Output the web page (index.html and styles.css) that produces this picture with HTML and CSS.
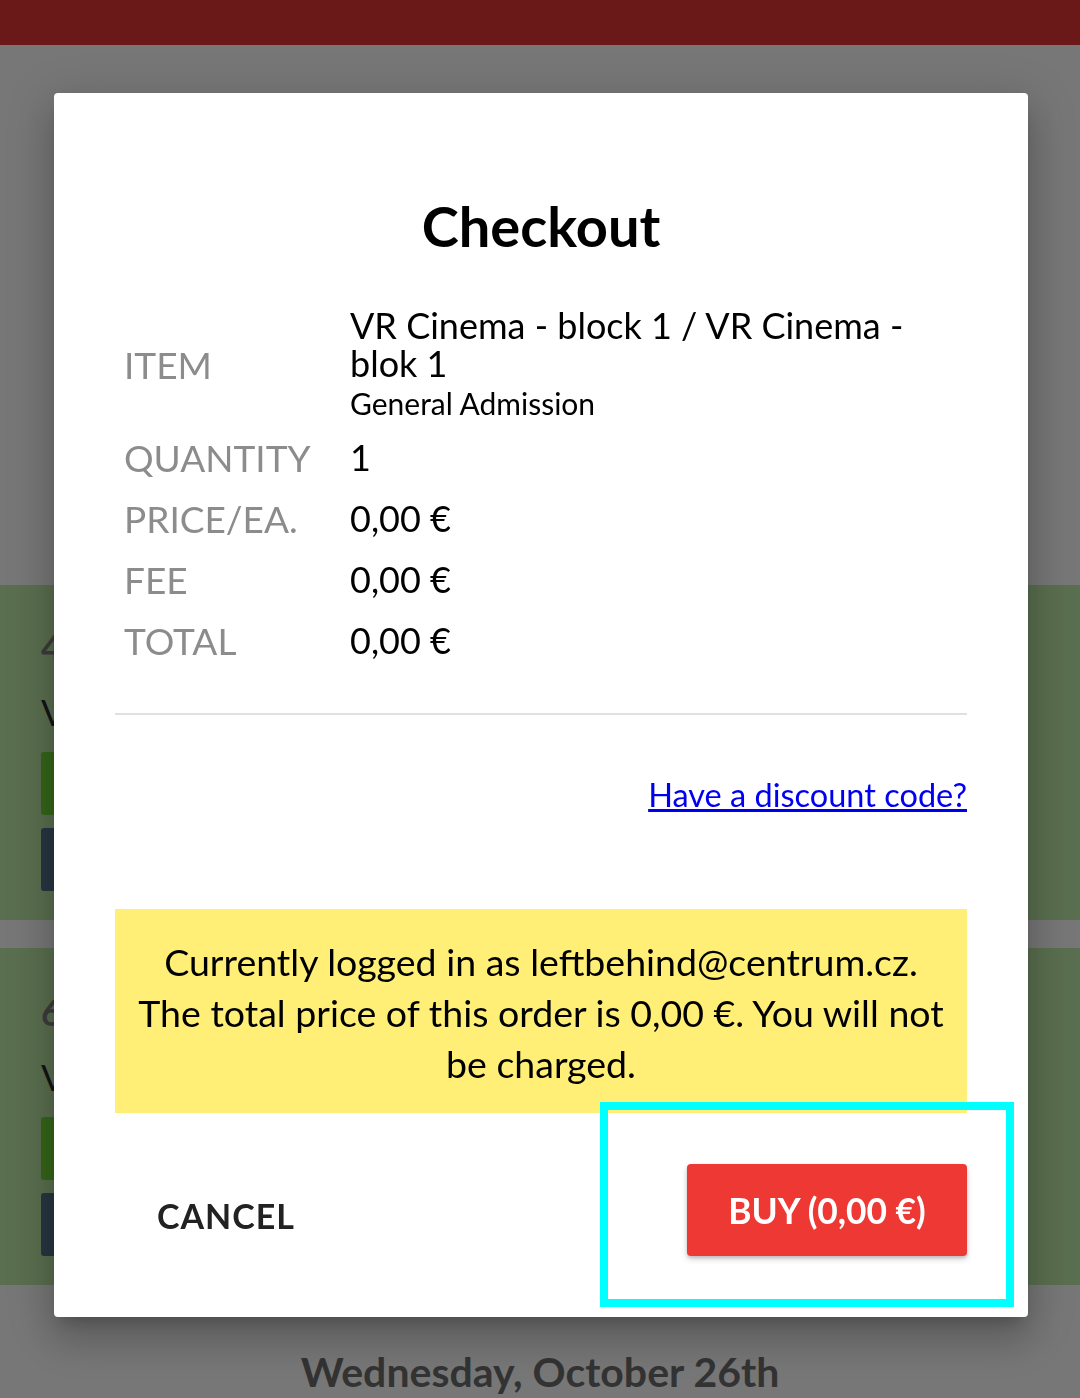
FILE: index.html
```html
<!DOCTYPE html>
<html lang="en">
<head>
<meta charset="utf-8">
<title>Checkout</title>
<link rel="stylesheet" href="styles.css">
</head>
<body>
<div class="page">
  <header class="topbar"></header>
  <main class="schedule">
    <section class="slot">
      <div class="slot-time">4:00 PM</div>
      <div class="slot-title">VR Cinema - block 1</div>
      <div class="slot-btn slot-btn-green"></div>
      <div class="slot-btn slot-btn-dark"></div>
    </section>
    <section class="slot slot-second">
      <div class="slot-time">6:00 PM</div>
      <div class="slot-title">VR Cinema - block 2</div>
      <div class="slot-btn slot-btn-green"></div>
      <div class="slot-btn slot-btn-dark"></div>
    </section>
    <h2 class="day">Wednesday, October 26th</h2>
  </main>
</div>

<div class="dialog">
  <h1 class="dialog-title">Checkout</h1>
  <table class="summary">
    <tr class="row-item">
      <td class="label">ITEM</td>
      <td class="value">
        <div class="item-name">VR Cinema - block 1 / VR Cinema - blok 1</div>
        <div class="item-type">General Admission</div>
      </td>
    </tr>
    <tr><td class="label">QUANTITY</td><td class="value">1</td></tr>
    <tr><td class="label">PRICE/EA.</td><td class="value">0,00 €</td></tr>
    <tr><td class="label">FEE</td><td class="value">0,00 €</td></tr>
    <tr><td class="label">TOTAL</td><td class="value">0,00 €</td></tr>
  </table>
  <hr class="divider">
  <div class="discount"><a href="#" class="discount-link">Have a discount code?</a></div>
  <div class="notice">Currently logged in as leftbehind@centrum.cz. The total price of this order is 0,00 €. You will not be charged.</div>
  <div class="actions">
    <button class="btn-cancel">CANCEL</button>
    <button class="btn-buy">BUY (0,00 €)</button>
  </div>
</div>
<div class="highlight"></div>
</body>
</html>
```
FILE: styles.css
```css
html, body {
  margin: 0;
  padding: 0;
}
body {
  background: #777777;
  font-family: Lato, "Open Sans", sans-serif;
  width: 1080px;
  height: 1398px;
  overflow: hidden;
}
.page {
  display: flex;
  flex-direction: column;
}
.topbar {
  height: 45px;
  background: #6b1818;
}
.schedule {
  padding-top: 540px;
  display: flex;
  flex-direction: column;
}
.slot {
  background: #5a6f4f;
  height: 335px;
  box-sizing: border-box;
  padding: 42px 0 0 41px;
  margin-bottom: 28px;
  display: flex;
  flex-direction: column;
  align-items: flex-start;
}
.slot-second {
  height: 337px;
  margin-bottom: 0;
  padding-top: 44px;
}
.slot-time,
.slot-title {
  max-width: 13px;
  overflow: hidden;
  white-space: nowrap;
}
.slot-time {
  font-size: 36px;
  line-height: 40px;
  color: #3c3c3c;
  font-weight: 700;
}
.slot-title {
  font-size: 36px;
  line-height: 40px;
  color: #141414;
  margin-top: 25px;
}
.slot-btn {
  width: 300px;
  height: 63px;
  border-radius: 3px;
}
.slot-btn-green {
  background: #356619;
  margin-top: 20px;
}
.slot-btn-dark {
  background: #263641;
  margin-top: 13px;
}
.day {
  margin: 0;
  padding-top: 62px;
  text-align: center;
  font-size: 41px;
  line-height: 50px;
  font-weight: 700;
  color: #333333;
}

.dialog {
  position: fixed;
  left: 54px;
  top: 93px;
  width: 974px;
  box-sizing: border-box;
  padding: 100px 61px 0;
  background: #ffffff;
  border-radius: 4px;
  box-shadow: 0 11px 15px -7px rgba(0,0,0,0.2), 0 24px 38px 3px rgba(0,0,0,0.14), 0 9px 46px 8px rgba(0,0,0,0.12);
}
.dialog-title {
  margin: 0;
  text-align: center;
  font-size: 56px;
  line-height: 65px;
  font-weight: 700;
  color: #000000;
}
.summary {
  margin-top: 42px;
  border-collapse: collapse;
  width: 100%;
  font-size: 36px;
}
.summary td {
  padding: 6px 9px;
  line-height: 49px;
  vertical-align: middle;
}
.row-item td {
  padding-bottom: 5px;
}
.label {
  width: 208px;
  color: #8c8c8c;
  font-size: 37px;
}
.value {
  color: #000000;
}
.item-name {
  line-height: 38px;
  padding-right: 40px;
}
.item-type {
  font-size: 30px;
  line-height: 38px;
  margin-top: 2px;
}
.divider {
  margin: 42px 0 0;
  border: 0;
  height: 2px;
  background: #e0e0e0;
}
.discount {
  margin-top: 59px;
  text-align: right;
  font-size: 32.5px;
  line-height: 41px;
}
.discount-link {
  color: #0000ee;
  text-decoration: underline;
}
.notice {
  margin-top: 94px;
  background: #ffef76;
  padding: 27px 20px 24px;
  text-align: center;
  font-size: 37.5px;
  line-height: 51px;
  color: #000000;
}
.actions {
  display: flex;
  justify-content: space-between;
  align-items: center;
  padding: 51px 0 61px;
}
.btn-cancel {
  font-family: inherit;
  background: none;
  border: 0;
  padding: 0 0 0 42px;
  margin-top: 10px;
  font-size: 34px;
  font-weight: 700;
  letter-spacing: 1px;
  color: #222222;
}
.btn-buy {
  font-family: inherit;
  width: 280px;
  height: 92px;
  border: 0;
  border-radius: 4px;
  background: #ee3833;
  color: #ffffff;
  font-size: 35.3px;
  font-weight: 700;
  box-shadow: 0 3px 6px rgba(0,0,0,0.18), 0 2px 3px rgba(0,0,0,0.12);
}
.highlight {
  position: absolute;
  left: 600px;
  top: 1102px;
  width: 414px;
  height: 205px;
  box-sizing: border-box;
  border: 8px solid #00ffff;
}
```
